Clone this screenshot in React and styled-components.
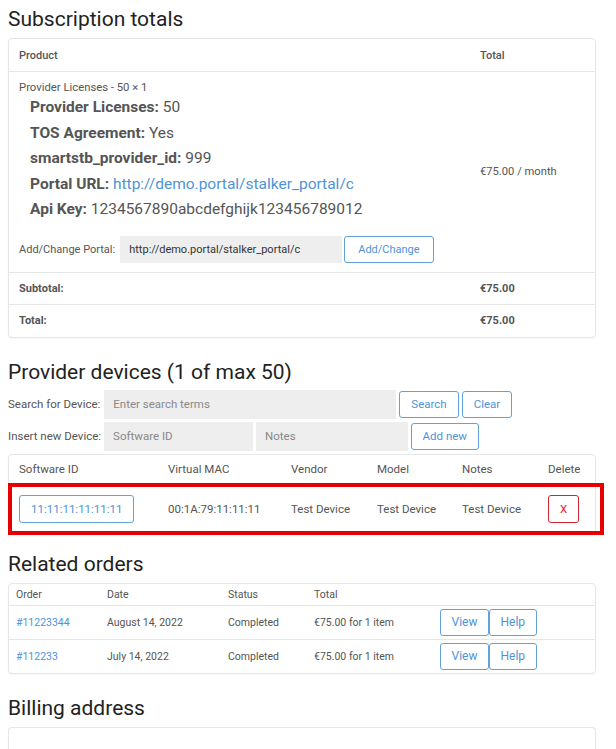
import React from "react";
import styled, { createGlobalStyle } from "styled-components";

const Global = createGlobalStyle`
  html, body { margin: 0; padding: 0; background: #fff; }
  body { font-family: Roboto, "Liberation Sans", Arial, sans-serif; color: #555; }
  * { box-sizing: border-box; }
`;

const BLUE = "#4f93d6";
const BLUE_BORDER = "#62a2da";
const BORDER = "#e6e6e6";

const Page = styled.div`
  width: 588px;
  margin-left: 8px;
  padding-top: 7px;
`;

const Section = styled.section`
  margin-top: ${(p) => p.$top || 0}px;
`;

const Heading = styled.h2`
  margin: 0 0 ${(p) => p.$mb ?? 7}px;
  font-size: 21px;
  line-height: 24px;
  font-weight: 400;
  color: #222;
`;

const Card = styled.div`
  position: relative;
  margin-top: ${(p) => p.$top || 0}px;
  border: 1px solid ${BORDER};
  border-radius: 4px;
  box-shadow: 0 1px 2px rgba(0, 0, 0, 0.04);
  background: #fff;
`;

const Row = styled.div`
  position: relative;
  display: grid;
  grid-template-columns: ${(p) => p.$cols};
  align-items: center;
  min-height: ${(p) => p.$h}px;
  border-top: ${(p) => (p.$first ? "none" : `1px solid ${BORDER}`)};
`;

const Cell = styled.div`
  padding: ${(p) => p.$pad || "0 10px"};
  font-size: ${(p) => p.$size || 11}px;
  font-weight: ${(p) => p.$weight || 400};
  color: #555;
  white-space: nowrap;
`;

const ItemName = styled.div`
  font-size: 11.3px;
  line-height: 13px;
`;

const Meta = styled.ul`
  list-style: none;
  margin: 1px 0 0 11px;
  padding: 0;
  font-size: 15.5px;
  line-height: 25.5px;
  color: #555;
`;

const MetaLabel = styled.strong`
  font-weight: 700;
`;

const Link = styled.a`
  color: ${BLUE};
  text-decoration: none;
`;

const InlineForm = styled.div`
  display: flex;
  align-items: center;
  gap: ${(p) => p.$gap || 3}px;
  margin-top: ${(p) => p.$top || 0}px;
`;

const Label = styled.span`
  font-size: ${(p) => p.$size || 11.5}px;
  color: #555;
  margin-right: ${(p) => p.$mr ?? 1}px;
  white-space: nowrap;
`;

const Input = styled.input`
  width: ${(p) => p.$w}px;
  height: ${(p) => p.$h || 29}px;
  border: none;
  background: #eeeeee;
  padding: 0 9px;
  font-family: inherit;
  font-size: ${(p) => p.$size || 11.5}px;
  color: #333;
  outline: none;
  &::placeholder { color: #888; }
`;

const Button = styled.button`
  height: ${(p) => p.$h || 27}px;
  padding: 0 ${(p) => p.$px || 11}px;
  border: 1px solid ${(p) => (p.$danger ? "#d9232f" : BLUE_BORDER)};
  border-radius: 3px;
  background: #fff;
  color: ${(p) => (p.$danger ? "#e0242f" : BLUE)};
  font-family: inherit;
  font-size: ${(p) => p.$size || 11.5}px;
  cursor: pointer;
  white-space: nowrap;
`;

const ButtonGroup = styled.div`
  display: flex;
`;

const Highlight = styled.div`
  position: absolute;
  top: -1px;
  left: -1px;
  right: -9px;
  bottom: -1px;
  border: 4px solid #e60000;
  pointer-events: none;
`;

const EmptyCard = styled(Card)`
  height: 40px;
  border-bottom: none;
  border-radius: 4px 4px 0 0;
`;

const SUB_COLS = "461px 1fr";
const DEV_COLS = "149px 123px 86px 85px 86px 1fr";
const ORD_COLS = "91px 121px 86px 126px 1fr";

export default function App() {
  return (
    <>
      <Global />
      <Page>
        <Section>
          <Heading>Subscription totals</Heading>
          <Card>
            <Row $cols={SUB_COLS} $h={32} $first>
              <Cell $weight={500}>Product</Cell>
              <Cell $weight={500}>Total</Cell>
            </Row>
            <Row $cols={SUB_COLS} $h={200}>
              <Cell $pad="9px 10px 9px">
                <ItemName>Provider Licenses - 50 × 1</ItemName>
                <Meta>
                  <li><MetaLabel>Provider Licenses:</MetaLabel> 50</li>
                  <li><MetaLabel>TOS Agreement:</MetaLabel> Yes</li>
                  <li><MetaLabel>smartstb_provider_id:</MetaLabel> 999</li>
                  <li>
                    <MetaLabel>Portal URL:</MetaLabel>{" "}
                    <Link href="#">http://demo.portal/stalker_portal/c</Link>
                  </li>
                  <li><MetaLabel>Api Key:</MetaLabel> 1234567890abcdefghijk123456789012</li>
                </Meta>
                <InlineForm $top={13} $gap={2}>
                  <Label $size={11} $mr={3}>Add/Change Portal:</Label>
                  <Input $w={222} $h={27} $size={11} defaultValue="http://demo.portal/stalker_portal/c" />
                  <Button $h={27} $px={13} $size={11}>Add/Change</Button>
                </InlineForm>
              </Cell>
              <Cell $size={11.2}>€75.00 / month</Cell>
            </Row>
            <Row $cols={SUB_COLS} $h={32}>
              <Cell $weight={700}>Subtotal:</Cell>
              <Cell $weight={700}>€75.00</Cell>
            </Row>
            <Row $cols={SUB_COLS} $h={33}>
              <Cell $weight={700}>Total:</Cell>
              <Cell $weight={700}>€75.00</Cell>
            </Row>
          </Card>
        </Section>

        <Section $top={22}>
          <Heading $mb={6}>Provider devices (1 of max 50)</Heading>
          <InlineForm>
            <Label>Search for Device:</Label>
            <Input $w={292} placeholder="Enter search terms" />
            <Button>Search</Button>
            <Button>Clear</Button>
          </InlineForm>
          <InlineForm $top={3}>
            <Label $mr={0}>Insert new Device:</Label>
            <Input $w={149} placeholder="Software ID" />
            <Input $w={152} placeholder="Notes" />
            <Button $px={10.5}>Add new</Button>
          </InlineForm>
          <Card $top={3}>
            <Row $cols={DEV_COLS} $h={28} $first>
              <Cell $size={11.5}>Software ID</Cell>
              <Cell $size={11.5}>Virtual MAC</Cell>
              <Cell $size={11.5}>Vendor</Cell>
              <Cell $size={11.5}>Model</Cell>
              <Cell $size={11.5}>Notes</Cell>
              <Cell $size={11.5}>Delete</Cell>
            </Row>
            <Row $cols={DEV_COLS} $h={51}>
              <Cell>
                <Button $h={28} $px={11}>11:11:11:11:11:11</Button>
              </Cell>
              <Cell $size={11.5}>00:1A:79:11:11:11</Cell>
              <Cell $size={11.5}>Test Device</Cell>
              <Cell $size={11.5}>Test Device</Cell>
              <Cell $size={11.5}>Test Device</Cell>
              <Cell>
                <Button $danger $h={28} $px={11}>X</Button>
              </Cell>
              <Highlight />
            </Row>
          </Card>
        </Section>

        <Section $top={17}>
          <Heading>Related orders</Heading>
          <Card>
            <Row $cols={ORD_COLS} $h={21} $first>
              <Cell $pad="0 7px" $size={10.5}>Order</Cell>
              <Cell $pad="0 7px" $size={10.5}>Date</Cell>
              <Cell $pad="0 7px" $size={10.5}>Status</Cell>
              <Cell $pad="0 7px" $size={10.5}>Total</Cell>
              <Cell />
            </Row>
            {[
              ["#11223344", "August 14, 2022"],
              ["#112233", "July 14, 2022"],
            ].map(([id, date]) => (
              <Row key={id} $cols={ORD_COLS} $h={34}>
                <Cell $pad="0 7px" $size={10.5}><Link href="#">{id}</Link></Cell>
                <Cell $pad="0 7px" $size={10.5}>{date}</Cell>
                <Cell $pad="0 7px" $size={10.5}>Completed</Cell>
                <Cell $pad="0 7px" $size={10.5}>€75.00 for 1 item</Cell>
                <Cell $pad="0 7px">
                  <ButtonGroup>
                    <Button $px={10.5} $size={12}>View</Button>
                    <Button $px={10.5} $size={12}>Help</Button>
                  </ButtonGroup>
                </Cell>
              </Row>
            ))}
          </Card>
        </Section>

        <Section $top={22}>
          <Heading>Billing address</Heading>
          <EmptyCard />
        </Section>
      </Page>
    </>
  );
}
